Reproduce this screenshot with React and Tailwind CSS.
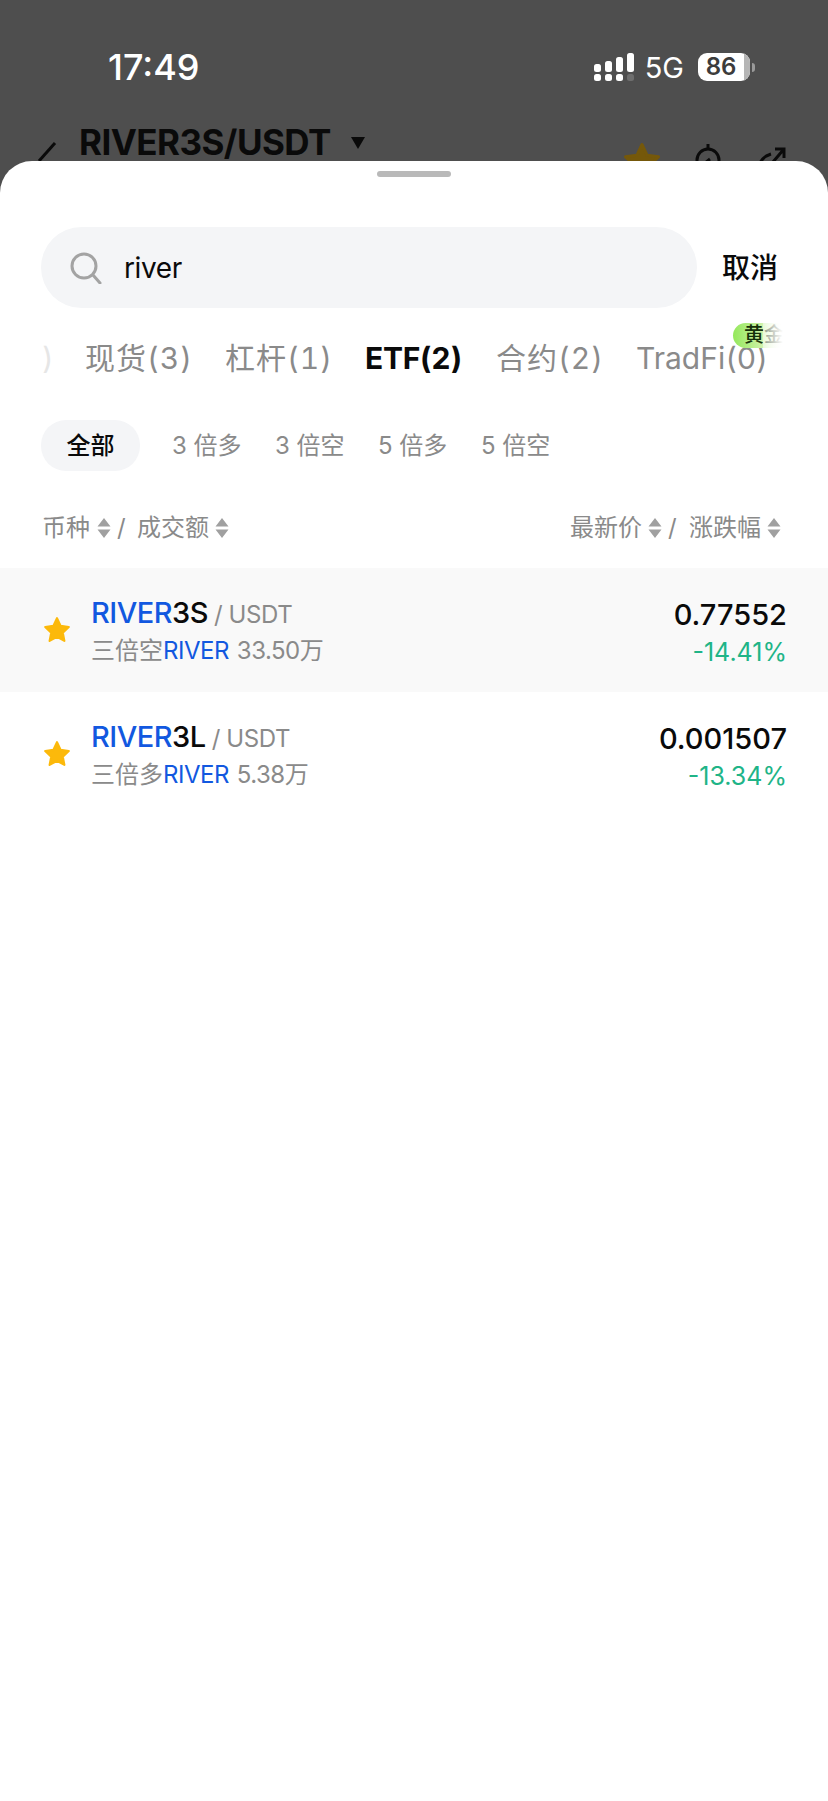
import React from 'react';

const latin = "font-['Inter','Noto_Sans_CJK_SC',sans-serif]";

function Star({ className }) {
  return (
    <svg viewBox="0 0 28 28" className={className}>
      <path
        d="M14 3l3.4 7.2 7.6 1-5.6 5.3 1.5 7.7L14 20.4l-6.9 3.8 1.5-7.7L3 11.2l7.6-1z"
        fill="currentColor"
        stroke="currentColor"
        strokeWidth="2"
        strokeLinejoin="round"
      />
    </svg>
  );
}

function SortArrows() {
  return (
    <svg viewBox="0 0 14 20" className="w-[14px] h-[20px] text-[#a0a0a0]">
      <path d="M7 0l6.5 8.500H.5z M.5 11.500h13L7 20z" fill="currentColor" />
    </svg>
  );
}

function SignalIcon() {
  return (
    <svg viewBox="0 0 40 28" className="w-[40px] h-[28px]">
      <rect x="0" y="11" width="7" height="8" rx="2.5" fill="#fff" />
      <rect x="11" y="8" width="7" height="11" rx="2.5" fill="#fff" />
      <rect x="22" y="4" width="7" height="15" rx="2.5" fill="#fff" />
      <rect x="33" y="0" width="7" height="19" rx="2.5" fill="#fff" />
      <rect x="0" y="21" width="7" height="7" rx="2.5" fill="#fff" />
      <rect x="11" y="21" width="7" height="7" rx="2.5" fill="#fff" />
      <rect x="22" y="21" width="7" height="7" rx="2.5" fill="#fff" />
      <rect x="33" y="21" width="7" height="7" rx="2.5" fill="#6e6e6e" />
    </svg>
  );
}

function Battery() {
  return (
    <div className="flex items-center">
      <div className="w-[52px] h-[28px] rounded-[9px] bg-white overflow-hidden flex">
        <div className="w-[46px] flex items-center justify-center text-[24px] font-semibold text-[#3c3c3c] leading-none">86</div>
        <div className="flex-1 bg-[#b5b5b5]" />
      </div>
      <div className="ml-[2px] w-[3px] h-[9px] rounded-r-full bg-[#9a9a9a]" />
    </div>
  );
}

function Row({ tail, cn, vol, price, change, active, name }) {
  return (
    <div className={`flex items-center justify-between h-[124px] pl-[42px] pr-[43px] ${active ? 'bg-[#f9f9f9]' : 'bg-white'}`}>
      <div className="flex items-center">
        <Star className="w-[30px] h-[30px] text-[#fcb90b]" />
        <div className="ml-[19px] flex flex-col">
          <div className="flex items-baseline h-[42px] mt-[-2px]">
            <span className="text-[29px] font-medium tracking-[-0.5px] text-[#1258e0]">RIVER</span>
            <span className="text-[29px] font-medium tracking-[-0.5px] text-[#0a0a0a]">{tail}</span>
            <span className="ml-[6px] text-[24px] tracking-[-0.4px] text-[#8a8a8a]">/ {name}</span>
          </div>
          <div className="flex items-baseline h-[34px] text-[24px] text-[#8a8a8a]">
            <span>{cn}</span>
            <span className="text-[#1258e0] tracking-[-0.5px]">RIVER</span>
            <span className="ml-[8px] tracking-[-0.5px]">{vol}</span>
          </div>
        </div>
      </div>
      <div className="flex flex-col items-end mt-[-1px] mr-[-2px]">
        <div className="h-[41px] text-[29px] font-medium text-[#0a0a0a]">{price}</div>
        <div className="h-[32px] text-[25px] text-[#20b487]">{change}</div>
      </div>
    </div>
  );
}

export default function App() {
  return (
    <div className={`${latin} h-[1801px] w-[828px] overflow-hidden flex flex-col bg-[#4e4e4e]`}>
      {/* Dimmed page behind the sheet */}
      <div className="h-[161px] overflow-hidden shrink-0">
        <div className="flex items-center justify-between h-[28px] mt-[53px] pl-[108px] pr-[73px]">
          <span className="text-[36px] font-medium text-white leading-none">17:49</span>
          <div className="flex items-center">
            <SignalIcon />
            <span className="ml-[11px] text-[29px] text-white leading-none">5G</span>
            <div className="ml-[14px]">
              <Battery />
            </div>
          </div>
        </div>
        <div className="flex items-start justify-between mt-[43px] pl-[37px] pr-[41px]">
          <div className="flex items-start">
            <svg viewBox="0 0 20 40" className="w-[20px] h-[40px] mt-[17px] text-[#0a0a0a]">
              <path d="M18 2L2 20" stroke="currentColor" strokeWidth="3" fill="none" />
            </svg>
            <span className="ml-[22px] text-[35px] font-bold tracking-[-0.55px] leading-[36px] text-[#0a0a0a]">RIVER3S/USDT</span>
            <svg viewBox="0 0 14 12" className="w-[14px] h-[12px] ml-[20px] mt-[13px] text-[#0a0a0a]">
              <path d="M0 0h14L7 12z" fill="currentColor" />
            </svg>
          </div>
          <div className="flex items-start mt-[16px]">
            <Star className="w-[42px] h-[42px] text-[#75580a]" />
            <svg viewBox="0 0 26 30" className="ml-[32px] mt-[3px] w-[26px] h-[30px] text-[#0a0a0a]" fill="none" stroke="currentColor" strokeWidth="3">
              <circle cx="13" cy="17" r="11" />
              <path d="M13 1v4M10 20l5-4" />
            </svg>
            <svg viewBox="0 0 32 30" className="ml-[34px] mt-[6px] w-[32px] h-[30px] text-[#0a0a0a]" fill="none" stroke="currentColor" strokeWidth="3">
              <path d="M3 28C3 16 9 10 16 8M18 16L29 3M20 3h9v9" />
            </svg>
          </div>
        </div>
      </div>

      {/* Search sheet */}
      <div className="flex-1 bg-white rounded-t-[32px]">
        <div className="flex justify-center pt-[10px]">
          <div className="w-[74px] h-[6px] rounded-full bg-[#b9b9b9]" />
        </div>

        <div className="flex items-center mt-[50px] pl-[41px]">
          <div className="w-[656px] h-[81px] rounded-full bg-[#f4f5f7] flex items-center pl-[29px]">
            <svg viewBox="0 0 32 32" className="w-[32px] h-[32px] text-[#a3a3a3]" fill="none" stroke="currentColor" strokeWidth="3">
              <circle cx="14" cy="14" r="12" />
              <path d="M23 23l7 8" strokeLinecap="round" />
            </svg>
            <span className="ml-[22px] text-[28px] tracking-[-0.4px] text-[#0a0a0a]">river</span>
          </div>
          <span className="ml-[25px] text-[28px] font-medium text-[#0a0a0a]">取消</span>
        </div>

        <div className="relative flex items-center h-[60px] mt-[20px] text-[30px] text-[#8a8a8a] whitespace-nowrap tabular-nums">
          <span className="absolute left-[42px] text-[#e6e6e6]">)</span>
          <span className="ml-[85px] w-[140px] tracking-[1px]">现货(3)</span>
          <span className="w-[140px] tracking-[1px]">杠杆(1)</span>
          <span className="w-[131px] font-bold tracking-[-0.3px] text-[#0a0a0a]">ETF(2)</span>
          <span className="w-[140px] tracking-[1px]">合约(2)</span>
          <span>TradFi(0)</span>
          <div className="absolute left-[733px] top-[-5px] w-[50px] h-[25px] rounded-l-full overflow-hidden pl-[11px] bg-gradient-to-r from-[#94e85a] via-[#c4f09a] to-white text-[20px] leading-[25px] font-medium text-[#16300a]">
            黄金
            <div className="absolute right-0 top-0 w-[20px] h-[25px] bg-gradient-to-r from-white/50 to-white" />
          </div>
        </div>

        <div className="flex items-center mt-[32px] pl-[41px] text-[24px] text-[#8a8a8a] whitespace-nowrap">
          <span className="w-[99px] h-[51px] rounded-[25px] bg-[#f4f5f7] flex items-center justify-center font-medium text-[#0a0a0a]">全部</span>
          <span className="ml-[32px] w-[103px]">3 倍多</span>
          <span className="w-[103px]">3 倍空</span>
          <span className="w-[103px]">5 倍多</span>
          <span>5 倍空</span>
        </div>

        <div className="flex items-center justify-between mt-[44px] pl-[42px] pr-[47px] h-[26px] text-[24px] text-[#8a8a8a] whitespace-nowrap">
          <div className="flex items-center">
            <span>币种</span>
            <span className="ml-[7px]"><SortArrows /></span>
            <span className="ml-[6px] w-[20px]">/</span>
            <span>成交额</span>
            <span className="ml-[6px]"><SortArrows /></span>
          </div>
          <div className="flex items-center">
            <span>最新价</span>
            <span className="ml-[6px]"><SortArrows /></span>
            <span className="ml-[6px] w-[21px]">/</span>
            <span>涨跌幅</span>
            <span className="ml-[6px]"><SortArrows /></span>
          </div>
        </div>

        <div className="mt-[27px]">
          <Row active tail="3S" name="USDT" cn="三倍空" vol="33.50万" price="0.77552" change="-14.41%" />
          <Row tail="3L" name="USDT" cn="三倍多" vol="5.38万" price="0.001507" change="-13.34%" />
        </div>
      </div>
    </div>
  );
}
